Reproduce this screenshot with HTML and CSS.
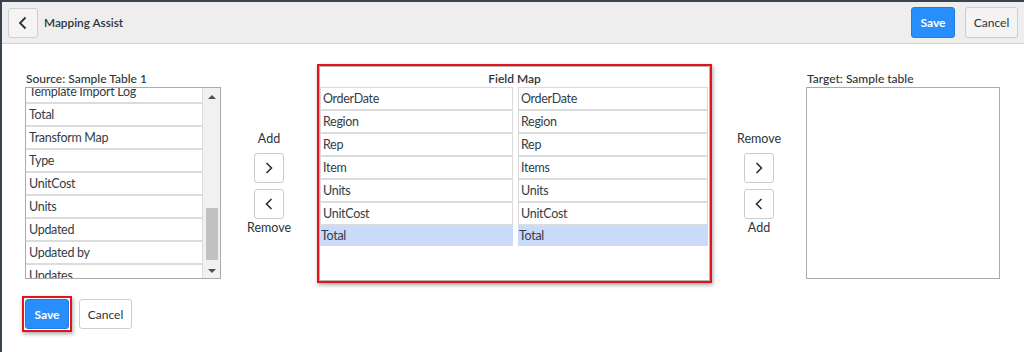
FILE: index.html
```html
<!DOCTYPE html>
<html>
<head>
<meta charset="utf-8">
<link rel="stylesheet" href="styles.css">
</head>
<body>
<div class="frame">
  <header class="header">
    <button class="back-btn" aria-label="Back">
      <svg width="12" height="14" viewBox="0 0 12 14"><path d="M8.5 1.5 L3 7 L8.5 12.5" fill="none" stroke="#2b2f33" stroke-width="1.8"/></svg>
    </button>
    <div class="title">Mapping Assist</div>
    <div class="spacer"></div>
    <button class="btn btn-primary">Save</button>
    <button class="btn btn-default btn-gap">Cancel</button>
  </header>

  <main class="content">
    <div class="row">
      <section class="panel">
        <div class="panel-label">Source: Sample Table 1</div>
        <div class="listbox">
          <div class="items">
            <div class="items-inner">
              <div class="item">Template Import Log</div>
              <div class="item">Total</div>
              <div class="item">Transform Map</div>
              <div class="item">Type</div>
              <div class="item">UnitCost</div>
              <div class="item">Units</div>
              <div class="item">Updated</div>
              <div class="item">Updated by</div>
              <div class="item">Updates</div>
            </div>
          </div>
          <div class="scrollbar">
            <div class="arrow-up"></div>
            <div class="thumb"></div>
            <div class="arrow-down"></div>
          </div>
        </div>
      </section>

      <div class="mover">
        <div class="mover-label">Add</div>
        <button class="arrow-btn" aria-label="Add"><svg width="10" height="14" viewBox="0 0 10 14"><path d="M2.5 2 L7.5 7 L2.5 12" fill="none" stroke="#2b2f33" stroke-width="1.6"/></svg></button>
        <button class="arrow-btn arrow-gap" aria-label="Remove"><svg width="10" height="14" viewBox="0 0 10 14"><path d="M7.5 2 L2.5 7 L7.5 12" fill="none" stroke="#2b2f33" stroke-width="1.6"/></svg></button>
        <div class="mover-label">Remove</div>
      </div>

      <section class="fieldmap">
        <div class="fieldmap-inner">
          <div class="fieldmap-title">Field Map</div>
          <div class="map-grid">
            <div class="cell first">OrderDate</div><div class="cell first">OrderDate</div>
            <div class="cell">Region</div><div class="cell">Region</div>
            <div class="cell">Rep</div><div class="cell">Rep</div>
            <div class="cell">Item</div><div class="cell">Items</div>
            <div class="cell">Units</div><div class="cell">Units</div>
            <div class="cell">UnitCost</div><div class="cell">UnitCost</div>
            <div class="cell selected">Total</div><div class="cell selected">Total</div>
          </div>
        </div>
      </section>

      <div class="mover mover-right">
        <div class="mover-label">Remove</div>
        <button class="arrow-btn" aria-label="Remove"><svg width="10" height="14" viewBox="0 0 10 14"><path d="M2.5 2 L7.5 7 L2.5 12" fill="none" stroke="#2b2f33" stroke-width="1.6"/></svg></button>
        <button class="arrow-btn arrow-gap" aria-label="Add"><svg width="10" height="14" viewBox="0 0 10 14"><path d="M7.5 2 L2.5 7 L7.5 12" fill="none" stroke="#2b2f33" stroke-width="1.6"/></svg></button>
        <div class="mover-label">Add</div>
      </div>

      <section class="panel target">
        <div class="panel-label">Target: Sample table</div>
        <div class="listbox empty"></div>
      </section>
    </div>

    <div class="actions">
      <span class="highlight-box"><button class="btn btn-primary">Save</button></span>
      <button class="btn btn-white btn-gap-bottom">Cancel</button>
    </div>
  </main>
</div>
</body>
</html>
```

FILE: styles.css
```css
* { box-sizing: border-box; }
html, body { margin: 0; padding: 0; }
body {
  width: 1024px;
  height: 352px;
  overflow: hidden;
  background: #ffffff;
  font-family: "Lato", "Open Sans", sans-serif;
  color: #2e3338;
}
.frame {
  height: 352px;
  border-top: 2px solid #39444f;
  border-left: 2px solid #39444f;
}
.header {
  height: 42px;
  background: #eeeeee;
  border-bottom: 1px solid #d4d4d4;
  display: flex;
  align-items: center;
  padding: 0 6px 0 6px;
}
.back-btn {
  width: 30px;
  height: 30px;
  padding: 0;
  border: 1px solid #cfcfcf;
  border-radius: 3px;
  background: #f4f4f4;
  display: flex;
  align-items: center;
  justify-content: center;
}
.title {
  margin-left: 6px;
  font-size: 11.8px;
  font-weight: 600;
  color: #2e3338;
}
.spacer { flex: 1; }
.btn {
  height: 31px;
  padding: 0;
  border-radius: 3px;
  font-family: inherit;
  font-size: 12px;
  cursor: pointer;
}
.btn-primary {
  width: 44px;
  background: #278efc;
  border: 1px solid #1f7de3;
  color: #ffffff;
  font-weight: 700;
}
.btn-default {
  width: 53px;
  background: #f4f4f4;
  border: 1px solid #cdcdcd;
  color: #2e3338;
}
.btn-white {
  width: 53px;
  background: #ffffff;
  border: 1px solid #cdcdcd;
  color: #2e3338;
}
.btn-gap { margin-left: 10px; }

.content { padding-left: 23px; }
.row {
  display: flex;
  align-items: flex-start;
  margin-top: 20px;
}
.panel {
  width: 196px;
  padding-top: 6px;
}
.panel.target { width: 194px; }
.panel-label {
  height: 17px;
  line-height: 17px;
  font-size: 12px;
  font-weight: 500;
  color: #2e3338;
  padding-left: 1px;
  white-space: nowrap;
}
.listbox {
  height: 192px;
  border: 1px solid #aaaaaa;
  display: flex;
  background: #ffffff;
}
.items {
  width: 177px;
  overflow: hidden;
  background: #dcdcdc;
}
.items-inner { margin-top: -7px; }
.item {
  height: 21px;
  margin: 0 1px 2px 0;
  background: #ffffff;
  font-size: 12.5px;
  letter-spacing: -0.3px;
  line-height: 21px;
  padding-left: 3px;
  color: #343d47;
  white-space: nowrap;
}
.scrollbar {
  flex: 1;
  background: #f1f1f1;
  display: flex;
  flex-direction: column;
  align-items: center;
}
.arrow-up {
  margin-top: 7px;
  width: 0; height: 0;
  border-left: 4px solid transparent;
  border-right: 4px solid transparent;
  border-bottom: 4px solid #505050;
}
.thumb {
  width: 12px;
  height: 52px;
  background: #c1c1c1;
  margin-top: 109px;
}
.arrow-down {
  margin-top: 9px;
  width: 0; height: 0;
  border-left: 4px solid transparent;
  border-right: 4px solid transparent;
  border-top: 4px solid #505050;
}

.mover {
  width: 96px;
  padding-top: 67px;
  display: flex;
  flex-direction: column;
  align-items: center;
}
.mover-right { width: 94px; }
.mover-label {
  height: 16px;
  line-height: 16px;
  font-size: 12.5px;
  color: #2e3338;
}
.arrow-btn {
  width: 30px;
  height: 30px;
  margin-top: 6px;
  padding: 0;
  border: 1px solid #cccccc;
  border-radius: 3px;
  background: #ffffff;
  display: flex;
  align-items: center;
  justify-content: center;
}
.arrow-gap { margin-top: 6px; margin-bottom: 1px; }

.fieldmap {
  width: 395px;
  height: 219px;
  border: 2px solid #e3121b;
  box-shadow: 1px 2px 4px rgba(0,0,0,0.35);
  background: #ffffff;
}
.fieldmap-inner {
  height: 100%;
  border: 1px solid #b4b4b4;
}
.fieldmap-title {
  height: 20px;
  line-height: 23px;
  text-align: center;
  font-size: 12px;
  font-weight: 600;
  color: #2e3338;
}
.map-grid {
  display: grid;
  grid-template-columns: 193px 190px;
  column-gap: 5px;
}
.cell {
  height: 23px;
  border-left: 1px solid #dadada;
  border-right: 1px solid #dadada;
  border-bottom: 2px solid #dcdcdc;
  font-size: 12.5px;
  letter-spacing: -0.3px;
  line-height: 21px;
  padding-left: 2px;
  color: #343d47;
  white-space: nowrap;
}
.cell.first { border-top: 1px solid #dadada; height: 24px; }
.cell.selected {
  background: #c9dbf8;
  border-color: #c9dbf8;
  border-bottom: none;
  height: 20px;
  line-height: 19px;
  padding-left: 0;
}

.actions {
  display: flex;
  align-items: center;
  margin-top: 13px;
  margin-left: -3px;
}
.actions .btn { height: 30px; }
.highlight-box {
  display: flex;
  padding: 1px;
  border: 2px solid #e3121b;
  box-shadow: 1px 2px 4px rgba(0,0,0,0.35);
}
.btn-gap-bottom { margin-left: 7px; }
```
